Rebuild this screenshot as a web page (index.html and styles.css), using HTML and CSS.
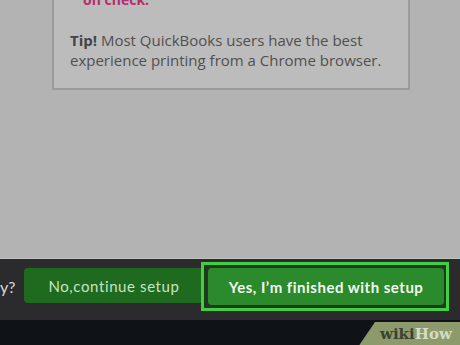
FILE: index.html
```html
<!DOCTYPE html>
<html lang="en">
<head>
    <meta charset="UTF-8">
    <meta name="viewport" content="width=device-width, initial-scale=1.0">
    <title>Setup</title>
    <link rel="stylesheet" href="styles.css">
</head>
<body>
    <div class="backdrop">
        <div class="card">
            <p class="warning">on check.</p>
            <p class="tip"><b>Tip!</b> Most QuickBooks users have the best experience printing from a Chrome browser.</p>
        </div>
    </div>
    <div class="action-bar">
        <span class="question">y?</span>
        <button class="btn btn-no">No,continue setup</button>
        <div class="focus-ring">
            <button class="btn btn-yes">Yes, I’m finished with setup</button>
        </div>
    </div>
    <footer class="bottom">
        <div class="badge"><span class="wiki">wiki</span><span class="how">How</span></div>
    </footer>
</body>
</html>
```

FILE: styles.css
```css
body {
    margin: 0;
    padding: 0;
    font-family: Lato, "Open Sans", sans-serif;
    background-color: #0f1217;
    overflow: hidden;
}
.backdrop {
    height: 259px;
    background-color: #b3b3b3;
    border-bottom: 1px solid #c2c2c2;
    box-sizing: border-box;
    overflow: hidden;
}
.card {
    margin: -10px 0 0 52px;
    width: 358px;
    height: 100px;
    box-sizing: border-box;
    background-color: #bcbcbc;
    border: 2px solid #9c9c9c;
    border-top: none;
    padding: 0 0 0 16px;
}
.warning {
    margin: 0 0 0 13px;
    color: #b3306b;
    font-family: "Open Sans", sans-serif;
    font-weight: bold;
    font-size: 14px;
    line-height: 20px;
}
.tip {
    margin: 20px 0 0 0;
    color: #505050;
    font-family: "Open Sans", sans-serif;
    font-size: 15px;
    line-height: 20px;
    width: 335px;
}
.tip b {
    color: #454545;
}
.action-bar {
    height: 61px;
    box-sizing: border-box;
    padding-top: 3px;
    background-color: #2b2b2d;
    display: flex;
    align-items: flex-start;
}
.question {
    color: #d8d8d8;
    font-size: 16px;
    width: 24px;
    margin-top: 15px;
}
.btn {
    font-family: inherit;
    font-size: 15px;
    border: none;
    border-radius: 4px;
    height: 35px;
    cursor: pointer;
}
.btn-no {
    width: 180px;
    margin-top: 6px;
    background-color: #1e6a1e;
    color: #c8e3c4;
    letter-spacing: 0.6px;
}
.focus-ring {
    margin-left: -3px;
    width: 248px;
    height: 49px;
    box-sizing: border-box;
    border: 3px solid #42d042;
    background-color: #1f3a1f;
    padding: 3px 4px 0 4px;
}
.btn-yes {
    width: 236px;
    height: 37px;
    background-color: #2b8a2b;
    color: #f4f8f2;
    font-weight: bold;
    letter-spacing: 0.5px;
}
.bottom {
    height: 25px;
    display: flex;
    justify-content: flex-end;
}
.badge {
    width: 82px;
    height: 25px;
    background-color: #8d9a6c;
    clip-path: polygon(17px 0, 100% 0, 100% 100%, 0 100%);
    padding-left: 22px;
    font-family: "DejaVu Serif", serif;
    font-weight: bold;
    font-size: 15px;
    line-height: 25px;
    margin-top: 2px;
    margin-right: -2px;
}
.wiki {
    color: #3b4230;
}
.how {
    color: #d4dcc6;
}
```
